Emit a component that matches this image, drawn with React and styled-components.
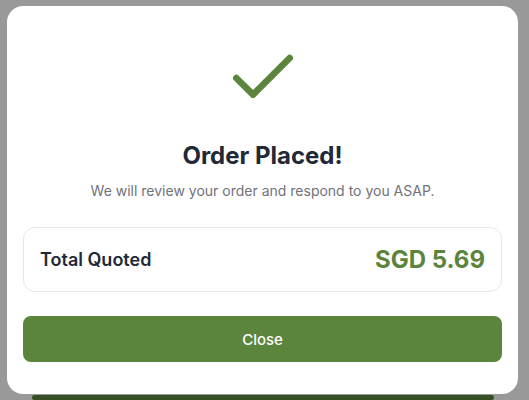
import React from 'react';
import styled, { createGlobalStyle } from 'styled-components';
import { Check } from 'lucide-react';

const GlobalStyle = createGlobalStyle`
  html, body {
    margin: 0;
    padding: 0;
    background: #999999;
    font-family: Inter, "Noto Sans", sans-serif;
    overflow: hidden;
  }
`;

const Screen = styled.div`
  height: 400px;
  display: flex;
  flex-direction: column;
`;

const Modal = styled.div`
  margin: 6px 11px 0 7px;
  background: #ffffff;
  border-radius: 16px;
  padding: 32px 16px 32px;
  display: flex;
  flex-direction: column;
  align-items: center;
`;

const IconWrap = styled.div`
  color: #5b843c;
  display: flex;
  height: 80px;
`;

const Title = styled.h2`
  margin: 22px 0 0;
  font-size: 24px;
  line-height: 32px;
  font-weight: 700;
  color: #1f2937;
`;

const Subtitle = styled.p`
  margin: 9px 0 0;
  font-size: 14px;
  line-height: 20px;
  color: #71717a;
`;

const TotalCard = styled.div`
  align-self: stretch;
  margin-top: 26px;
  height: 65px;
  box-sizing: border-box;
  border: 1px solid #e5e7eb;
  border-radius: 12px;
  padding: 0 16px 0 16px;
  display: flex;
  align-items: center;
  justify-content: space-between;
`;

const Label = styled.span`
  font-size: 18px;
  font-weight: 600;
  color: #1f2937;
`;

const Amount = styled.span`
  font-size: 24px;
  font-weight: 700;
  color: #5b843c;
`;

const CloseButton = styled.button`
  align-self: stretch;
  margin-top: 24px;
  height: 46px;
  border: none;
  border-radius: 8px;
  background: #5b843c;
  color: #ffffff;
  font-family: Inter, "Noto Sans", sans-serif;
  font-size: 15px;
  font-weight: 500;
  cursor: pointer;
`;

const BehindButton = styled.div`
  margin: 1px 35px 0 32px;
  height: 40px;
  border-radius: 12px;
  background: #364f24;
`;

const App = () => {
  return (
    <Screen>
      <GlobalStyle />
      <Modal>
        <IconWrap>
          <Check size={80} strokeWidth={2} />
        </IconWrap>
        <Title>Order Placed!</Title>
        <Subtitle>We will review your order and respond to you ASAP.</Subtitle>
        <TotalCard>
          <Label>Total Quoted</Label>
          <Amount>SGD 5.69</Amount>
        </TotalCard>
        <CloseButton>Close</CloseButton>
      </Modal>
      <BehindButton />
    </Screen>
  );
};

export default App;
